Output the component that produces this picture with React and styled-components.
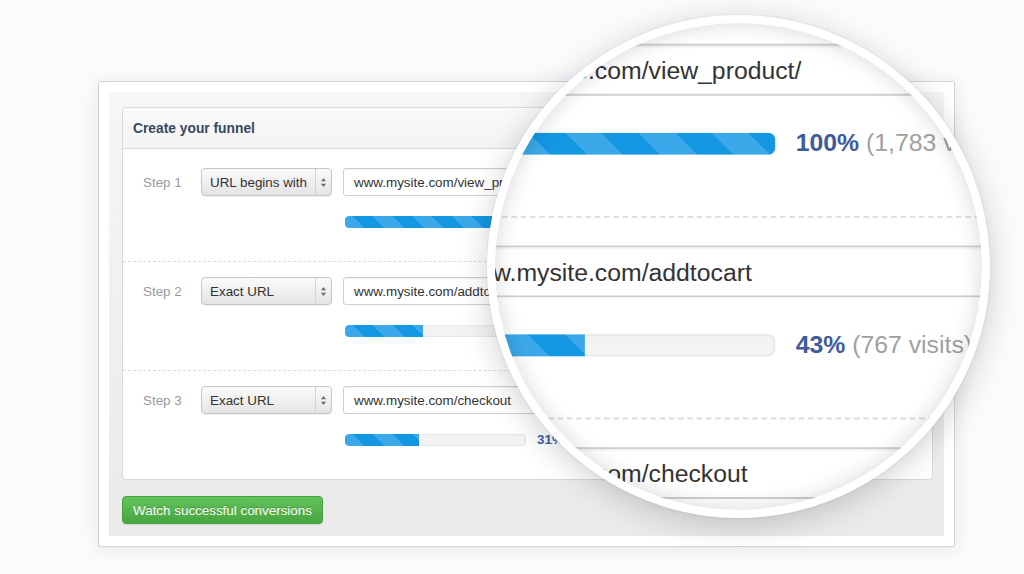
import React from "react";
import styled, { createGlobalStyle } from "styled-components";

const GlobalStyle = createGlobalStyle`
  html, body { margin: 0; padding: 0; }
  body {
    background: #fafbfc;
    font-family: "Liberation Sans", Arial, Helvetica, sans-serif;
  }
`;

const Stage = styled.div`
  position: relative;
  width: 1024px;
  height: 574px;
  overflow: hidden;
  box-sizing: border-box;
  padding: 81px 0 0 98px;
  background: #fafbfc;
`;

const Frame = styled.div`
  width: 857px;
  height: 466px;
  box-sizing: border-box;
  background: #ffffff;
  border: 1px solid #d4d4d6;
  border-radius: 2px;
  box-shadow: 0 2px 18px rgba(40, 50, 70, 0.1);
  padding: 10px;
`;

const Well = styled.div`
  height: 100%;
  box-sizing: border-box;
  background: linear-gradient(#f6f6f6, #eaeaea);
  padding: 15px 13px 0 13px;
  display: flex;
  flex-direction: column;
  align-items: flex-start;
`;

const PanelBox = styled.div`
  width: 811px;
  box-sizing: border-box;
  background: #ffffff;
  border: 1px solid #d8d8d8;
  border-radius: 4px;
  font-size: 13.4px;
`;

const PanelHeader = styled.div`
  height: 40px;
  display: flex;
  align-items: center;
  padding-left: 10px;
  background: linear-gradient(#fafafa, #f3f3f3);
  border-bottom: 1px solid #dcdcdc;
  border-radius: 4px 4px 0 0;
  font-size: 13.8px;
  font-weight: bold;
  color: #36495d;
`;

const PanelBody = styled.div`
  padding-top: 4px;
`;

const StepRow = styled.div`
  display: grid;
  grid-template-columns: 48px 131px 380px;
  column-gap: 11px;
  row-gap: 20px;
  padding: 15px 0 33px 19px;
  border-top: ${(p) => (p.$first ? "none" : "1px dashed #dcdcdc")};
`;

const StepLabel = styled.div`
  align-self: center;
  padding-left: 1px;
  color: #9a9a9a;
  white-space: nowrap;
`;

const SelectBox = styled.div`
  height: 28px;
  box-sizing: border-box;
  display: flex;
  align-items: stretch;
  border: 1px solid #c6c6c6;
  border-radius: 4px;
  background: linear-gradient(#fbfbfb, #e4e4e4);
  box-shadow: 0 1px 1px rgba(0, 0, 0, 0.06);
  color: #333;
`;

const SelectText = styled.div`
  flex: 1;
  display: flex;
  align-items: center;
  padding-left: 8px;
  white-space: nowrap;
  overflow: hidden;
`;

const SelectArrows = styled.div`
  width: 15px;
  flex-shrink: 0;
  border-left: 1px solid #d3d3d3;
  display: flex;
  align-items: center;
  justify-content: center;
`;

const UrlInput = styled.div`
  height: 28px;
  box-sizing: border-box;
  display: flex;
  align-items: center;
  padding-left: 10px;
  border: 1px solid #cfcfcf;
  border-radius: 3px;
  background: #fff;
  box-shadow: inset 0 1px 1px rgba(0, 0, 0, 0.05);
  color: #333;
  white-space: nowrap;
  overflow: hidden;
`;

const BarLine = styled.div`
  grid-column: 3;
  height: 12px;
  display: flex;
  align-items: center;
  padding-left: 2px;
`;

const Track = styled.div`
  width: 181px;
  height: 12px;
  box-sizing: border-box;
  border-radius: 4px;
  background: #f3f3f3;
  box-shadow: inset 0 0 0 1px #e8e8e8;
  overflow: hidden;
  flex-shrink: 0;
`;

const Fill = styled.div`
  height: 100%;
  border-radius: 4px 0 0 4px;
  background: repeating-linear-gradient(
    45deg,
    #3ba9e9 0px,
    #3ba9e9 14px,
    #1497e3 14px,
    #1497e3 28px
  );
`;

const Percent = styled.div`
  margin-left: 11px;
  line-height: 12px;
  white-space: nowrap;
  color: #a0a0a0;
  b {
    color: #3c5c9b;
    font-weight: bold;
  }
`;

const GreenButton = styled.button`
  margin-top: 16px;
  width: 201px;
  height: 28px;
  border: 1px solid #45a043;
  border-radius: 4px;
  background: linear-gradient(#63c25a, #48a640);
  color: #fff;
  font-family: "Liberation Sans", Arial, sans-serif;
  font-size: 13.4px;
  text-shadow: 0 -1px 0 rgba(0, 0, 0, 0.2);
  box-shadow: 0 1px 1px rgba(0, 0, 0, 0.1);
  padding: 0;
  white-space: nowrap;
`;

const Magnifier = styled.div`
  position: absolute;
  left: 487px;
  top: 15px;
  width: 503px;
  height: 503px;
  box-sizing: border-box;
  border-radius: 50%;
  border: 8px solid #ffffff;
  background: #ffffff;
  box-shadow: 0 6px 30px rgba(30, 35, 50, 0.22), 0 0 3px rgba(0, 0, 0, 0.08);
`;

const Lens = styled.div`
  position: relative;
  width: 100%;
  height: 100%;
  border-radius: 50%;
  overflow: hidden;
  background: #fff;
  &::after {
    content: "";
    position: absolute;
    inset: 0;
    border-radius: 50%;
    box-shadow: inset 0 0 22px rgba(0, 0, 0, 0.16);
    pointer-events: none;
  }
`;

const Zoomed = styled.div`
  position: absolute;
  left: -467px;
  top: -92px;
  transform: scale(1.85);
  transform-origin: 0 0;
`;

const Arrows = () => (
  <svg width="7" height="11" viewBox="0 0 7 11">
    <path d="M3.5 1 L6 4.2 H1 Z" fill="#6b6b6b" />
    <path d="M3.5 10 L6 6.8 H1 Z" fill="#6b6b6b" />
  </svg>
);

const steps = [
  { label: "Step 1", type: "URL begins with", url: "www.mysite.com/view_product/", fill: 181, pct: "100%", visits: "(1,783 visits)" },
  { label: "Step 2", type: "Exact URL", url: "www.mysite.com/addtocart", fill: 78, pct: "43%", visits: "(767 visits)" },
  { label: "Step 3", type: "Exact URL", url: "www.mysite.com/checkout", fill: 74, pct: "31%", visits: "(553 visits)" },
];

const Funnel = () => (
  <PanelBox>
    <PanelHeader>Create your funnel</PanelHeader>
    <PanelBody>
      {steps.map((s, i) => (
        <StepRow key={s.label} $first={i === 0}>
          <StepLabel>{s.label}</StepLabel>
          <SelectBox>
            <SelectText>{s.type}</SelectText>
            <SelectArrows>
              <Arrows />
            </SelectArrows>
          </SelectBox>
          <UrlInput>{s.url}</UrlInput>
          <BarLine>
            <Track>
              <Fill style={{ width: s.fill }} />
            </Track>
            <Percent>
              <b>{s.pct}</b> {s.visits}
            </Percent>
          </BarLine>
        </StepRow>
      ))}
    </PanelBody>
  </PanelBox>
);

export default function App() {
  return (
    <>
      <GlobalStyle />
      <Stage>
        <Frame>
          <Well>
            <Funnel />
            <GreenButton>Watch successful conversions</GreenButton>
          </Well>
        </Frame>
        <Magnifier>
          <Lens>
            <Zoomed>
              <Funnel />
            </Zoomed>
          </Lens>
        </Magnifier>
      </Stage>
    </>
  );
}
